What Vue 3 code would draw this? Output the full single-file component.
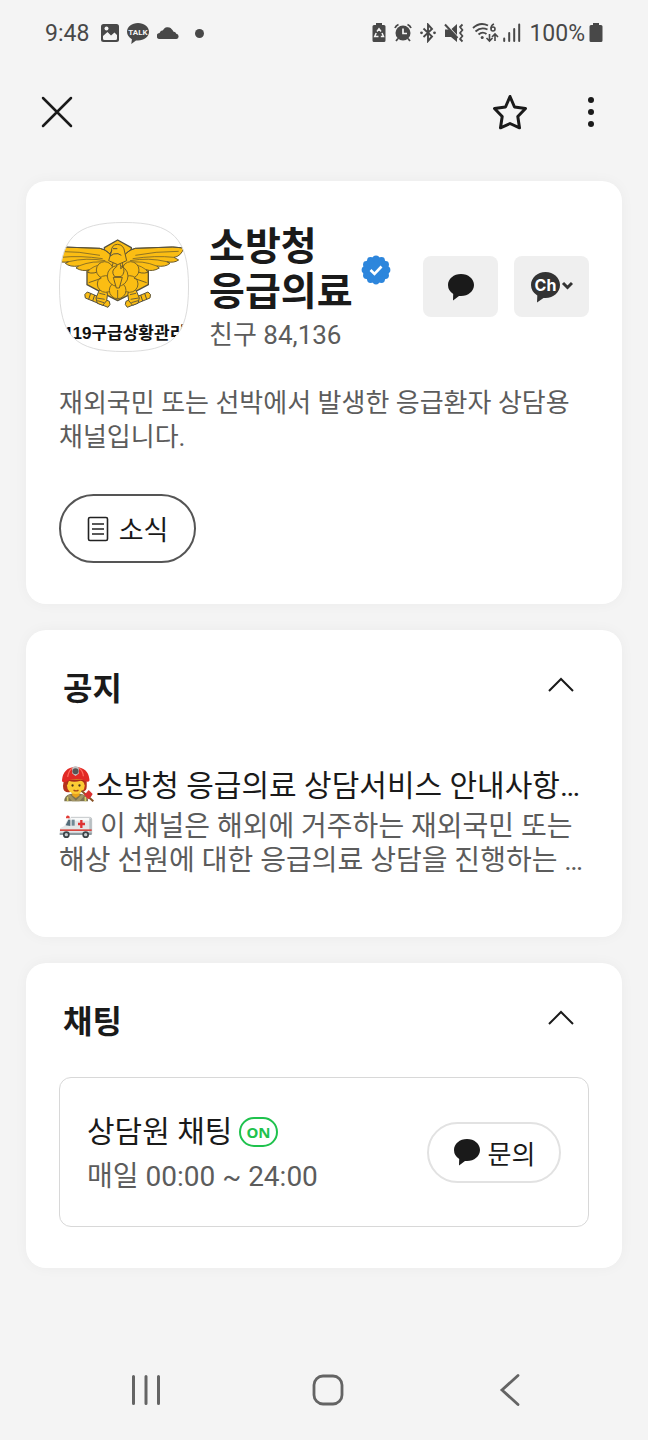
<template>
  <div class="screen">
    <!-- 상태 표시줄 -->
    <div class="status-bar">
      <div class="status-group">
        <span class="clock">9:48</span>
        <svg class="icon-photo" width="18" height="20" viewBox="0 0 18 20">
          <rect x="0" y="1" width="18" height="18" rx="2.5" fill="#484848" />
          <path d="M2 15.5V13l4.500-4 3.500 3.500 3.500-3L16 12v3.500q0 1.500-1.500 1.500h-11Q2 17 2 15.500z" fill="#f4f4f4" />
          <circle cx="5.500" cy="5.500" r="2" fill="#f4f4f4" />
        </svg>
        <svg class="icon-talk" width="22" height="22" viewBox="0 0 22 22">
          <path d="M11 1c6 0 11 3.700 11 8.800s-5 8.700-11 8.700l-2-.1L4.300 22l.6-4.800C2 15.700 0 13 0 9.800 0 4.700 5 1 11 1z" fill="#484848" />
          <text x="11" y="13" text-anchor="middle" class="talk-text">TALK</text>
        </svg>
        <svg class="icon-cloud" width="22" height="20" viewBox="0 0 22 20">
          <path d="M3 16a3 3 0 0 1-.5-6Q3.400 7.600 6 7.300A5 5 0 0 1 14.500 6q1.500 1 1.800 2.500 2.500.2 3 2.200a2.700 2.700 0 0 1 .2 5.300z" fill="#484848" />
        </svg>
        <span class="status-dot"></span>
      </div>
      <div class="status-group">
        <svg width="14" height="20" viewBox="0 0 14 20">
          <path d="M4 0h6v2h2q1.500 0 1.500 1.500v14q0 1.500-1.500 1.500H2Q.5 19 .5 17.500v-14Q.5 2 2 2h2z" fill="#484848" />
          <path d="M5 8.500 7 5.800l2 2.700M10 10l1.500 3.500H8.800M6.500 13.500H2.700L4.200 10" fill="none" stroke="#f4f4f4" stroke-width="1.500" />
        </svg>
        <svg class="icon-alarm" width="18" height="20" viewBox="0 0 18 20">
          <circle cx="9" cy="10" r="7.500" fill="#484848" />
          <path d="M1 5Q2 2.500 4.500 1.500M17 5q-1-2.500-3.500-3.500M4 15.500l-2 2.500M14 15.500l2 2.500" stroke="#484848" stroke-width="1.800" fill="none" />
          <path d="M9 5.500V10.500h4" stroke="#f4f4f4" stroke-width="1.700" fill="none" />
        </svg>
        <svg class="icon-bt" width="16" height="20" viewBox="0 0 16 20">
          <path d="M3.500 5.500 12 13.500l-4 4.500V1.500L12 6l-8.500 8" fill="none" stroke="#484848" stroke-width="1.900" />
          <circle cx="1.500" cy="9.800" r="1.400" fill="#484848" />
          <circle cx="14.500" cy="9.800" r="1.400" fill="#484848" />
        </svg>
        <svg class="icon-mute" width="20" height="20" viewBox="0 0 20 20">
          <path d="M1 6.500H5L13 15v4L7 14H1zM7.500 6 13 1V12z" fill="#484848" />
          <path d="M1 1.500 13.500 15" stroke="#484848" stroke-width="2" />
          <path d="M18.500 1.500 16 4 18.500 7 16 10 18.500 13 16 16 18.500 18.500" fill="none" stroke="#484848" stroke-width="1.800" stroke-linejoin="round" />
        </svg>
        <svg class="icon-wifi" width="27" height="20" viewBox="0 0 27 20">
          <path d="M1 5Q8-1.500 16 2.500M3.500 8.500Q9 3.500 15.500 6.500M6.500 11.500q4-3.500 8-.5" fill="none" stroke="#484848" stroke-width="1.900" />
          <circle cx="10.200" cy="14.500" r="1.500" fill="#484848" />
          <path d="M22 1q-3 1-3 4.500" fill="none" stroke="#484848" stroke-width="1.600" />
          <circle cx="21" cy="6" r="2" fill="none" stroke="#484848" stroke-width="1.600" />
          <path d="M17.500 11v7M14.500 15l3 3 3-3M23 18v-7M20 14l3-3 3 3" fill="none" stroke="#484848" stroke-width="1.600" />
        </svg>
        <svg class="icon-signal" width="18" height="20" viewBox="0 0 18 20">
          <path d="M1.200 15.500V18M6.200 10v8M11.200 6v12M16.200 1.500V18" stroke="#484848" stroke-width="2" stroke-linecap="round" />
        </svg>
        <span class="percent">100%</span>
        <svg class="icon-battery" width="14" height="20" viewBox="0 0 14 20">
          <path d="M4 0h6v2h2q1.500 0 1.500 1.500v14q0 1.500-1.500 1.500H2Q.5 19 .5 17.500v-14Q.5 2 2 2h2z" fill="#484848" />
        </svg>
      </div>
    </div>

    <!-- 상단 버튼 -->
    <header class="top-bar">
      <button class="icon-btn" type="button" aria-label="닫기">
        <svg width="32" height="32" viewBox="0 0 32 32">
          <path d="M2 2 30 30M30 2 2 30" stroke="#1a1a1a" stroke-width="2.500" stroke-linecap="round" />
        </svg>
      </button>
      <div class="top-actions">
        <button class="icon-btn" type="button" aria-label="즐겨찾기">
          <svg width="36" height="36" viewBox="0 0 36 36">
            <path d="M18 2.500 22.500 13 33.500 14.500 25.800 22.500 27.500 33.800 18 29.500 8.500 33.800 10.200 22.500 2.500 14.500 13.500 13z" fill="none" stroke="#1a1a1a" stroke-width="3" stroke-linejoin="round" />
          </svg>
        </button>
        <button class="icon-btn" type="button" aria-label="더보기">
          <svg width="8" height="32" viewBox="0 0 8 32">
            <circle cx="4" cy="4" r="3" fill="#1a1a1a" />
            <circle cx="4" cy="16" r="3" fill="#1a1a1a" />
            <circle cx="4" cy="28" r="3" fill="#1a1a1a" />
          </svg>
        </button>
      </div>
    </header>

    <main class="content">
      <!-- 프로필 -->
      <section class="card profile">
        <div class="profile-head">
          <svg class="avatar" width="130" height="130" viewBox="0 0 130 130">
            <defs>
              <clipPath id="avatarClip">
                <path :d="squircle" />
              </clipPath>
              <g id="wing">
                <path d="M4 114 38 111 150 115Q178 122 192 150L186 170 150 180Q134 194 112 187L118 179Q98 186 78 174L86 168Q60 172 46 160L56 155Q34 160 20 150L34 142Q14 140 4 114z" fill="#fbbd13" stroke="#6b5a2a" stroke-width="3" stroke-linejoin="round" />
                <path d="M20 124Q90 124 150 136M34 142Q90 136 158 146M56 155Q110 142 166 152M86 168Q130 150 172 158M118 179Q146 158 178 164M150 180 182 168" fill="none" stroke="#7b6526" stroke-width="2.500" />
                <path d="M4 114 38 111 150 115Q166 117 180 132" fill="none" stroke="#55513f" stroke-width="3" />
              </g>
              <g id="torch">
                <path d="M112 246 178 274Q184 284 174 292L106 264Q100 252 112 246z" fill="#fbbd13" stroke="#55513f" stroke-width="3" />
                <path d="M122 250 116 268M134 255 128 273" stroke="#55513f" stroke-width="3" />
                <path d="M148 240 168 236Q176 252 170 272L158 286 142 280 138 264z" fill="#fbbd13" stroke="#55513f" stroke-width="3" />
                <path d="M140 264 164 268M142 272 162 278M148 250 166 254" stroke="#55513f" stroke-width="2.500" />
              </g>
            </defs>
            <g clip-path="url(#avatarClip)">
              <rect width="130" height="130" fill="#fff" />
              <g transform="translate(-9 -12) scale(.3333)">
                <path d="M203 90 244 113V158L295 178V224L250 248 203 272 156 248 111 224V182L163 158V113z" fill="#fbbd13" stroke="#55513f" stroke-width="4" stroke-linejoin="round" />
                <use href="#wing" />
                <use href="#wing" transform="translate(406 0) scale(-1 1)" />
                <use href="#torch" />
                <use href="#torch" transform="translate(406 0) scale(-1 1)" />
                <g fill="#fbbd13" stroke="#7b6526" stroke-width="3">
                  <circle cx="164" cy="180" r="25" />
                  <circle cx="242" cy="180" r="25" />
                  <circle cx="167" cy="222" r="25" />
                  <circle cx="239" cy="222" r="25" />
                  <circle cx="203" cy="241" r="25" />
                  <circle cx="203" cy="198" r="31" />
                </g>
                <path d="M116 218 154 205M290 218 252 205M203 240V268" stroke="#7b6526" stroke-width="3" />
                <path d="M194 200Q180 182 200 170 204 162 199 152 216 162 212 176 220 174 218 166 228 188 213 200zM190 202H217L208 234H199z" fill="#fbbd13" stroke="#6b5a2a" stroke-width="3" />
                <path d="M184 126Q184 104 202 103 222 104 224 126L230 152 203 164 176 152z" fill="#fbbd13" stroke="#6b5a2a" stroke-width="3" />
                <path d="M186 122Q178 128 181 138 190 129 204 131L214 136" fill="none" stroke="#55513f" stroke-width="3" />
                <path d="M189 116H202" stroke="#55513f" stroke-width="3" />
              </g>
              <text x="5" y="117" class="avatar-text">119구급상황관리</text>
            </g>
            <path :d="squircle" fill="none" stroke="#dcdcdc" />
          </svg>
          <div class="profile-info">
            <div class="name-row">
              <h1 class="name">소방청<br />응급의료</h1>
              <svg class="verified" width="30" height="30" viewBox="0 0 30 30">
                <circle cx="15" cy="15" r="13" fill="#2d86dc" />
                <circle v-for="(p, i) in lobes" :key="i" :cx="p.x" :cy="p.y" r="3.400" fill="#2d86dc" />
                <path d="M9.500 15 13.500 19 20.500 11.500" fill="none" stroke="#fff" stroke-width="2.600" />
              </svg>
            </div>
            <p class="friends">친구 84,136</p>
          </div>
          <div class="profile-actions">
            <button class="square-btn" type="button" aria-label="채팅하기">
              <svg width="26" height="28" viewBox="0 0 26 28">
                <path :d="bubble" fill="#1a1a1a" />
              </svg>
            </button>
            <button class="square-btn" type="button" aria-label="채널">
              <svg width="42" height="32" viewBox="0 0 42 32">
                <path d="M14.500 1C22.500 1 29 6.800 29 14s-6.500 13-14.500 13h-2L6 31.500 6.300 24.500Q0 20.500 0 14C0 6.800 6.500 1 14.500 1z" fill="#333" />
                <text x="14.500" y="20" text-anchor="middle" class="ch-text">Ch</text>
                <path d="M32 12 36.500 16.500 41 12" fill="none" stroke="#333" stroke-width="3" />
              </svg>
            </button>
          </div>
        </div>
        <p class="description">재외국민 또는 선박에서 발생한 응급환자 상담용 채널입니다.</p>
        <button class="news-btn" type="button">
          <svg width="22" height="26" viewBox="0 0 22 26">
            <rect x="1.500" y="1.500" width="19" height="23" rx="1.500" fill="none" stroke="#222" stroke-width="1.600" />
            <path d="M5 8H17M5 13H17M5 18H17" stroke="#222" stroke-width="1.600" />
          </svg>
          소식
        </button>
      </section>

      <!-- 공지 -->
      <section class="card notice">
        <div class="card-head">
          <h2 class="card-title">공지</h2>
          <button class="fold-btn" type="button" aria-label="공지 접기">
            <svg width="26" height="16" viewBox="0 0 26 16">
              <path d="M1 14 13 2 25 14" fill="none" stroke="#1a1a1a" stroke-width="2" />
            </svg>
          </button>
        </div>
        <a class="notice-link" href="#">
          <span class="notice-title">
            <svg class="emoji emoji-fire" width="33" height="37" viewBox="0 0 100 112">
              <path d="M10 46Q2 66 10 78 20 86 30 80H64Q78 80 78 64V44z" fill="#b5321c" />
              <path d="M10 110Q10 92 28 88L44 84 62 88Q82 92 82 110z" fill="#7d7350" />
              <path d="M34 80H56V92L45 100 34 92z" fill="#e8a21c" />
              <path d="M26 88 45 108 64 88 70 94 56 110H34L20 94z" fill="#a19466" />
              <path d="M20 96V110M74 96V110" stroke="#d8cf6a" stroke-width="5" />
              <ellipse cx="45" cy="62" rx="27" ry="26" fill="#fccb35" />
              <path d="M18 62Q16 46 28 44H62Q74 48 72 62 70 50 60 48 38 54 24 48z" fill="#a82a18" />
              <circle cx="35" cy="62" r="3.500" fill="#49321d" />
              <circle cx="56" cy="62" r="3.500" fill="#49321d" />
              <path d="M38 76Q46 81 53 76" fill="none" stroke="#a84b16" stroke-width="4" />
              <path d="M3 46Q6 8 44 5 82 8 86 42 88 52 78 50 44 34 12 52 2 54 3 46z" fill="#e12a25" />
              <path d="M20 36Q24 14 36 9M68 34Q66 16 54 9" fill="none" stroke="#ff6b5e" stroke-width="4" />
              <path d="M34 8Q44 0 54 8V26L44 33 34 26z" fill="#c4c4c4" />
              <circle cx="44" cy="19" r="9" fill="#555" />
              <path d="M62 78 98 110" stroke="#8a5327" stroke-width="6" />
              <path d="M68 88Q78 86 84 76L96 88Q92 98 82 104z" fill="#da3030" />
            </svg>소방청 응급의료 상담서비스 안내사항…</span>
          <span class="notice-body">
            <svg class="emoji emoji-car" width="34" height="26" viewBox="0 0 102 78">
              <path d="M36 10H92Q98 10 98 16V60H4Q0 50 4 42L16 36 26 16Q28 10 36 10z" fill="#e4e7e8" />
              <path d="M36 10H92Q98 10 98 16V20H34z" fill="#f9fafa" />
              <path d="M36 10H92Q98 10 98 16V60" fill="none" stroke="#aab0b3" stroke-width="2" />
              <path d="M98 14V60H91V12z" fill="#b8bfc2" />
              <path d="M3 46H98V51H3z" fill="#d84740" />
              <path d="M20 34 28 17H34V36z" fill="#536b78" />
              <path d="M38 17H47V35H38z" fill="#708995" />
              <path d="M21 9Q25 1 32 8V13H21z" fill="#e23b35" />
              <path d="M67 18V42M57 30H78" stroke="#de3232" stroke-width="7" />
              <path d="M2 56H98V63H2z" fill="#8d999e" />
              <circle cx="22" cy="62" r="10" fill="#3b4347" />
              <circle cx="80" cy="62" r="10" fill="#3b4347" />
              <circle cx="22" cy="62" r="5" fill="#c6ccce" />
              <circle cx="80" cy="62" r="5" fill="#c6ccce" />
            </svg>
            이 채널은 해외에 거주하는 재외국민 또는 해상 선원에 대한 응급의료 상담을 진행하는 …
          </span>
        </a>
      </section>

      <!-- 채팅 -->
      <section class="card chat">
        <div class="card-head">
          <h2 class="card-title">채팅</h2>
          <button class="fold-btn" type="button" aria-label="채팅 접기">
            <svg width="26" height="16" viewBox="0 0 26 16">
              <path d="M1 14 13 2 25 14" fill="none" stroke="#1a1a1a" stroke-width="2" />
            </svg>
          </button>
        </div>
        <div class="chat-box">
          <div class="chat-info">
            <div class="chat-name">
              <span>상담원 채팅</span>
              <span class="on-badge">ON</span>
            </div>
            <p class="chat-time">매일 00:00 ~ 24:00</p>
          </div>
          <button class="ask-btn" type="button">
            <svg width="28" height="28" viewBox="0 0 26 28">
              <path :d="bubble" fill="#1a1a1a" />
            </svg>
            문의
          </button>
        </div>
      </section>
    </main>

    <!-- 하단 내비게이션 -->
    <nav class="nav-bar">
      <button class="icon-btn" type="button" aria-label="최근 앱">
        <svg width="32" height="32" viewBox="0 0 32 32">
          <path d="M3.500 2.500V29.500M16 2.500V29.500M28.500 2.500V29.500" stroke="#646464" stroke-width="3" stroke-linecap="round" />
        </svg>
      </button>
      <button class="icon-btn" type="button" aria-label="홈">
        <svg width="32" height="32" viewBox="0 0 32 32">
          <rect x="2" y="2" width="28" height="28" rx="9" fill="none" stroke="#646464" stroke-width="2.800" />
        </svg>
      </button>
      <button class="icon-btn" type="button" aria-label="뒤로">
        <svg width="32" height="32" viewBox="0 0 32 32">
          <path d="M24 1.500 8 16 24 30.500" fill="none" stroke="#646464" stroke-width="2.800" stroke-linecap="round" />
        </svg>
      </button>
    </nav>
  </div>
</template>

<script setup>
// 프로필 이미지 외곽선
const squircle =
  'M65 .5C114 .5 129.500 16 129.500 65S114 129.500 65 129.500 .5 114 .5 65 16 .5 65 .5z'

// 말풍선 아이콘
const bubble =
  'M13 1C20.200 1 26 5.800 26 12s-5.800 11-13 11h-2L5 27.500 5.200 21Q0 17.500 0 12C0 5.800 5.800 1 13 1z'

// 인증 배지 둘레의 톱니
const lobes = Array.from({ length: 12 }, (_, i) => {
  const angle = (i * Math.PI) / 6
  return { x: 15 + 11 * Math.cos(angle), y: 15 + 11 * Math.sin(angle) }
})
</script>

<style>
body {
  background: #f4f4f4;
}
</style>

<style scoped>
.screen {
  min-height: 100vh;
  display: flex;
  flex-direction: column;
  background: #f4f4f4;
  color: #1a1a1a;
  font-family: Roboto, 'Noto Sans CJK KR', sans-serif;
  word-break: keep-all;
}
svg {
  display: block;
  flex-shrink: 0;
}
h1,
h2,
p {
  margin: 0;
}
button {
  padding: 0;
  border: 0;
  background: none;
  color: inherit;
  font-family: inherit;
  display: flex;
  align-items: center;
  justify-content: center;
}

/* 상태 표시줄 */
.status-bar {
  height: 66px;
  padding: 0 45px;
  display: flex;
  align-items: center;
  justify-content: space-between;
  color: #484848;
  font-size: 23px;
}
.status-group {
  display: flex;
  align-items: center;
  gap: 8px;
}
.clock {
  margin-right: 4px;
}
.talk-text {
  font-size: 8px;
  font-weight: 700;
  fill: #f4f4f4;
}
.status-dot {
  width: 9px;
  height: 9px;
  margin-left: 8px;
  border-radius: 50%;
  background: #484848;
}
.icon-signal {
  margin-left: -4px;
}
.percent {
  margin-right: -4px;
}

/* 상단 버튼 */
.top-bar {
  height: 92px;
  padding: 0 27px;
  display: flex;
  align-items: center;
  justify-content: space-between;
}
.top-actions {
  display: flex;
  gap: 21px;
}
.icon-btn {
  width: 60px;
  height: 60px;
}

.content {
  padding: 23px 26px;
  display: flex;
  flex-direction: column;
  gap: 26px;
}
.card {
  padding: 41px 33px;
  border-radius: 20px;
  background: #fff;
  box-shadow: 0 0 14px rgba(0, 0, 0, 0.04);
}

/* 프로필 */
.profile-head {
  display: flex;
  align-items: flex-start;
}
.avatar-text {
  font-family: 'Liberation Sans', 'Noto Sans CJK KR', sans-serif;
  font-size: 17px;
  font-weight: 700;
  fill: #111;
}
.profile-info {
  flex: 1;
  margin-left: 20px;
  padding-top: 3px;
}
.name-row {
  display: flex;
  align-items: center;
  gap: 8px;
}
.name {
  font-size: 39px;
  font-weight: 700;
  line-height: 45px;
  white-space: nowrap;
}
.friends {
  font-size: 26px;
  line-height: 40px;
  color: #5c5c5c;
}
.profile-actions {
  display: flex;
  gap: 16px;
  padding-top: 34px;
}
.square-btn {
  width: 75px;
  height: 61px;
  border-radius: 8px;
  background: #efefef;
}
.ch-text {
  font-family: Inter, sans-serif;
  font-size: 16px;
  font-weight: 700;
  fill: #fff;
}
.description {
  margin-top: 31px;
  font-size: 26px;
  line-height: 34px;
  color: #5c5c5c;
}
.news-btn {
  width: 137px;
  height: 69px;
  margin-top: 40px;
  gap: 10px;
  border: 2px solid #555;
  border-radius: 35px;
  font-size: 27px;
}

/* 공지, 채팅 */
.card-head {
  height: 40px;
  padding: 0 15px 0 4px;
  display: flex;
  align-items: center;
  justify-content: space-between;
}
.notice,
.chat {
  padding-top: 39px;
}
.notice {
  padding-bottom: 59px;
}
.card-title {
  font-size: 32px;
  font-weight: 700;
  line-height: 40px;
}
.fold-btn {
  height: 32px;
  align-items: flex-start;
  padding-top: 4px;
}
.notice-link {
  display: block;
  margin-top: 55px;
  color: #1a1a1a;
  text-decoration: none;
}
.emoji {
  display: inline-block;
}
.emoji-fire {
  margin: 0 2px;
  vertical-align: -6px;
}
.emoji-car {
  vertical-align: -4px;
}
.notice-title {
  display: block;
  font-size: 30px;
  line-height: 44px;
  height: 44px;
  margin-right: -8px;
  white-space: nowrap;
}
.notice-body {
  display: block;
  margin-top: 2px;
  font-size: 28px;
  line-height: 34px;
  color: #5c5c5c;
}
.chat-box {
  margin-top: 35px;
  padding: 27px;
  border: 1px solid #d8d8d8;
  border-radius: 12px;
  display: flex;
  align-items: center;
  justify-content: space-between;
}
.chat-info {
  padding-top: 4px;
}
.chat-name {
  display: flex;
  align-items: center;
  gap: 7px;
  font-size: 30px;
  line-height: 45px;
}
.on-badge {
  padding: 0 5px;
  border: 2px solid #1fc24d;
  border-radius: 15px;
  font-family: 'Noto Sans', sans-serif;
  font-size: 15px;
  font-weight: 700;
  line-height: 26px;
  color: #1fc24d;
}
.chat-time {
  font-size: 28px;
  line-height: 45px;
  color: #5c5c5c;
}
.ask-btn {
  width: 134px;
  height: 61px;
  gap: 7px;
  border: 2px solid #e2e2e2;
  border-radius: 31px;
  font-size: 26px;
}

/* 하단 내비게이션 */
.nav-bar {
  height: 100px;
  margin-top: auto;
  padding: 0 47px 0 55px;
  display: flex;
  align-items: center;
  justify-content: space-around;
}
</style>
